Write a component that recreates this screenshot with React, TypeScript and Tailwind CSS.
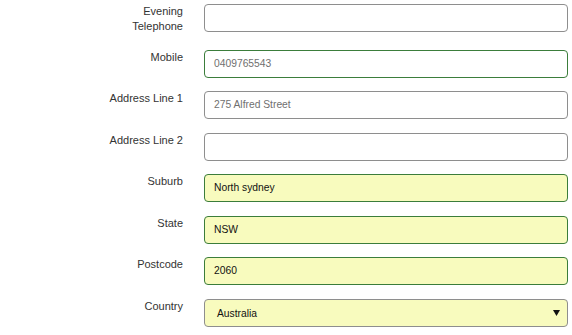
import React from "react";

type Row = {
  label: string[];
  value?: string;
  muted?: boolean;
  tone: "plain" | "green" | "yellow" | "yellowGray";
  select?: boolean;
  mb: string;
};

const rows: Row[] = [
  { label: ["Evening", "Telephone"], tone: "plain", mb: "mb-[16px]" },
  { label: ["Mobile"], value: "0409765543", muted: true, tone: "green", mb: "mb-[13px]" },
  { label: ["Address Line 1"], value: "275 Alfred Street", muted: true, tone: "plain", mb: "mb-[14px]" },
  { label: ["Address Line 2"], tone: "plain", mb: "mb-[13px]" },
  { label: ["Suburb"], value: "North sydney", tone: "yellow", mb: "mb-[14px]" },
  { label: ["State"], value: "NSW", tone: "yellow", mb: "mb-[13px]" },
  { label: ["Postcode"], value: "2060", tone: "yellow", mb: "mb-[14px]" },
  { label: ["Country"], value: "Australia", tone: "yellowGray", select: true, mb: "mb-0" },
];

function boxClass(tone: Row["tone"]) {
  if (tone === "green") return "border-[#3b7d3b] bg-white";
  if (tone === "yellow") return "border-[#3b7d3b] bg-[#f8fbbe]";
  if (tone === "yellowGray") return "border-[#8e8e8e] bg-[#f8fbbe]";
  return "border-[#8e8e8e] bg-white";
}

export default function App() {
  return (
    <div
      className="w-[572px] h-[335px] bg-white pt-[4px] overflow-hidden"
      style={{ fontFamily: '"Liberation Sans", Arial, sans-serif' }}
    >
      {rows.map((r, i) => (
        <div key={i} className={`flex items-start ${r.mb}`}>
          <div className="w-[204px] pr-[21px] text-right text-[11px] leading-[15px] text-[#333]">
            {r.label.map((l, j) => (
              <div key={j}>{l}</div>
            ))}
          </div>
          <div
            className={`w-[364px] h-[28px] border rounded-[4px] flex items-center justify-between ${boxClass(
              r.tone
            )} ${r.select ? "pl-[12px] pr-[7px] pt-[1px]" : "pl-[9px]"}`}
          >
            <span className={`text-[10.3px] ${r.muted ? "text-[#6f6f6f]" : "text-[#111]"}`}>
              {r.value ?? ""}
            </span>
            {r.select && (
              <svg width="7" height="6" viewBox="0 0 7 6" className="mt-[-1px]">
                <path d="M0 0 H7 L3.5 6 Z" fill="#111" />
              </svg>
            )}
          </div>
        </div>
      ))}
    </div>
  );
}
